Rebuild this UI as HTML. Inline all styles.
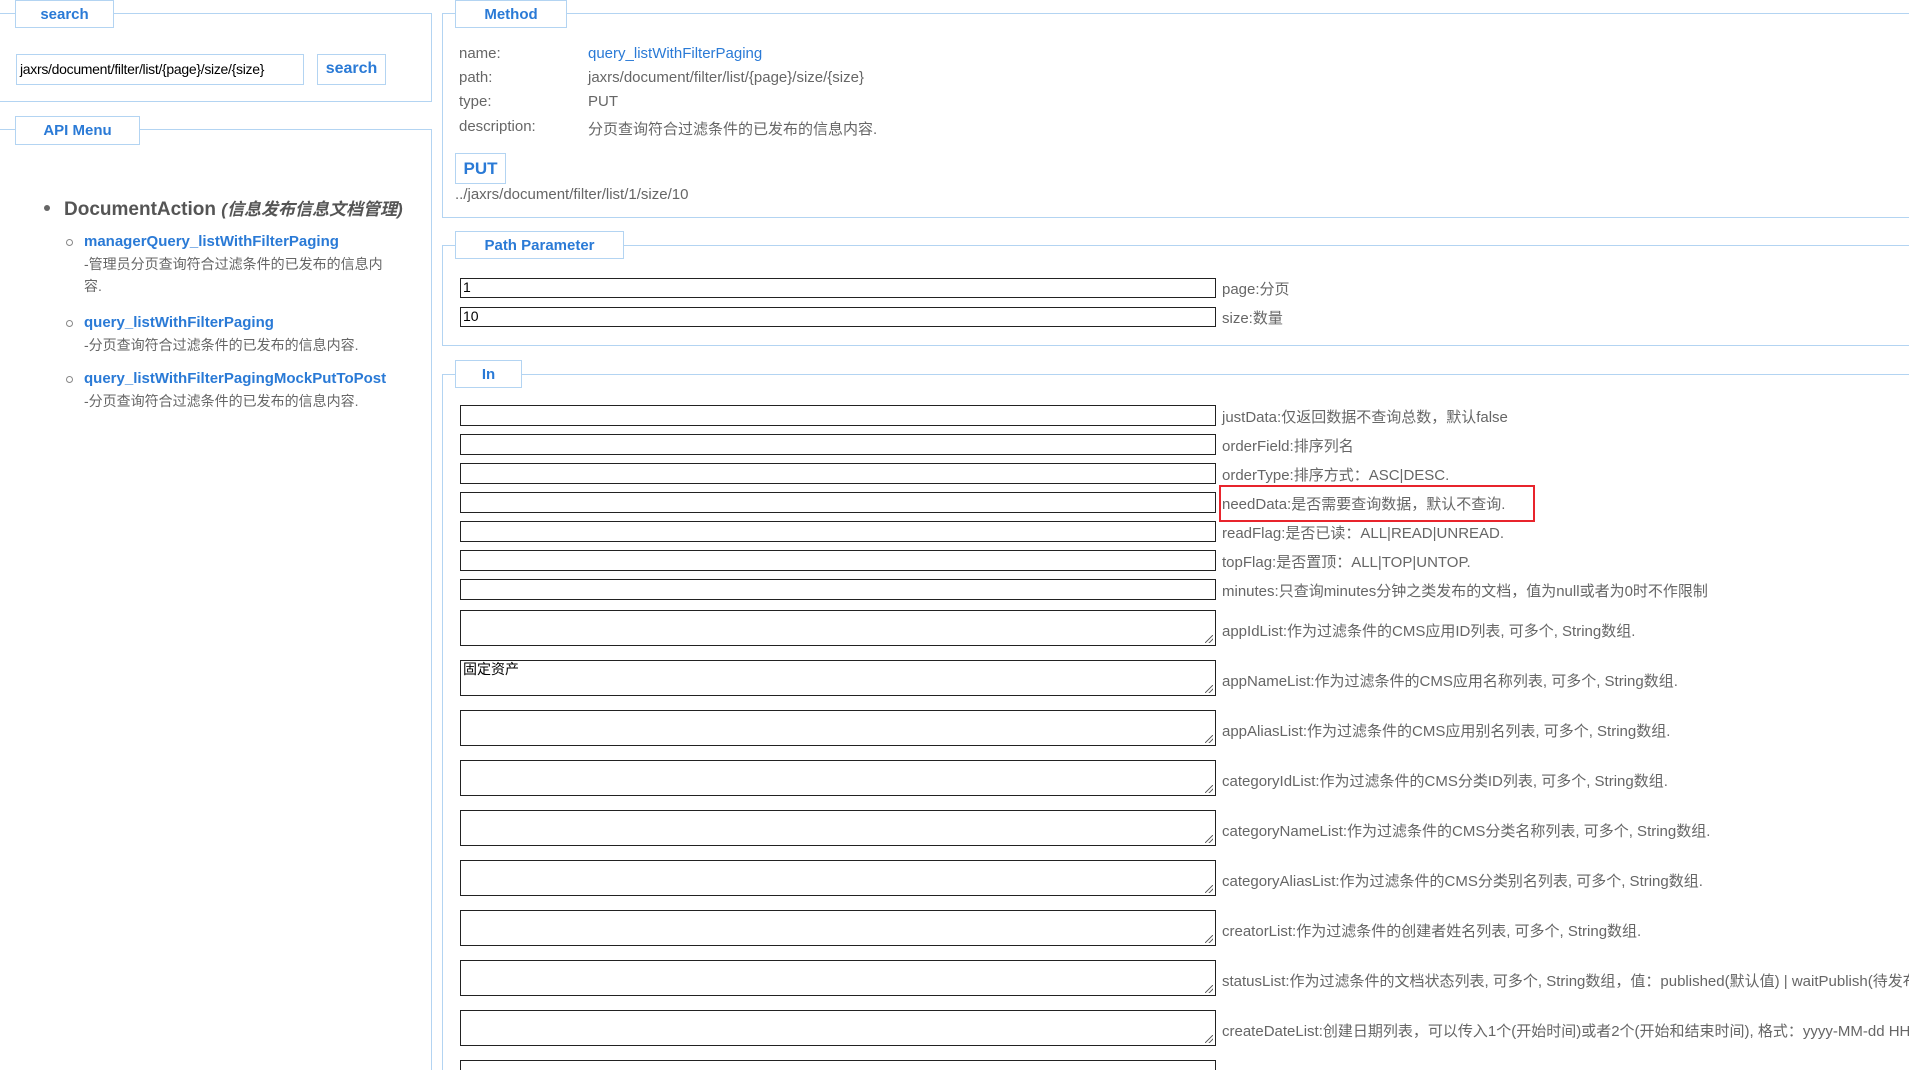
<!DOCTYPE html>
<html><head><meta charset="utf-8"><style>
*{margin:0;padding:0;box-sizing:border-box}
html,body{width:1909px;height:1070px;overflow:hidden}
body{background:#fff;font-family:"Liberation Sans","Noto Sans CJK SC",sans-serif;color:#666}
#w{position:relative;width:1909px;height:1070px;overflow:hidden}
.a{position:absolute}
.fs{position:absolute;border:1.5px solid #b3d4f2}
.lg{position:absolute;border:1.5px solid #b3d4f2;background:#fff;color:#2a7ad6;font-weight:bold;font-size:15px;text-align:center}
.inp{position:absolute;border:1.5px solid #222;background:#fff;font-size:14px;color:#000;padding-left:2px;line-height:17px}
.lbl{position:absolute;font-size:15px;color:#666;white-space:nowrap}
.ta::after{content:"";position:absolute;right:2px;bottom:2px;width:8px;height:8px;background:linear-gradient(135deg,transparent 45%,#666 45%,#666 55%,transparent 55%,transparent 70%,#666 70%,#666 80%,transparent 80%)}
.link{color:#2a7ad6;font-weight:bold;font-size:15px;line-height:22px;white-space:nowrap}
.desc{font-size:14px;color:#666;line-height:22px;white-space:nowrap}
</style></head><body><div id="w">
<div class="fs" style="left:0;top:13px;width:432px;height:89px;border-left:none"></div>
<div class="lg" style="left:15px;top:0;width:99px;height:28px;line-height:27px">search</div>
<div class="a" style="left:16px;top:54px;width:288px;height:31px;border:1.5px solid #b3d4f2;font-size:14px;color:#000;line-height:28px;padding-left:3px;letter-spacing:-0.3px">jaxrs/document/filter/list/{page}/size/{size}</div>
<div class="lg" style="left:317px;top:54px;width:69px;height:31px;line-height:28px;font-size:16px">search</div>
<div class="fs" style="left:0;top:129px;width:432px;height:1100px;border-left:none"></div>
<div class="lg" style="left:15px;top:116px;width:125px;height:29px;line-height:28px">API Menu</div>
<div class="a" style="left:44px;top:205px;width:6px;height:6px;border-radius:50%;background:#666"></div>
<div class="a" style="left:64px;top:195px;font-size:19px;font-weight:bold;color:#555;white-space:nowrap">DocumentAction <i style="font-size:17px">(信息发布信息文档管理)</i></div>
<div class="a" style="left:66px;top:239px;width:7px;height:7px;border-radius:50%;border:1.2px solid #888"></div>
<div class="a" style="left:84px;top:231px"><div class="link">managerQuery_listWithFilterPaging</div><div class="desc">-管理员分页查询符合过滤条件的已发布的信息内<br>容.</div></div>
<div class="a" style="left:66px;top:320px;width:7px;height:7px;border-radius:50%;border:1.2px solid #888"></div>
<div class="a" style="left:84px;top:312px"><div class="link">query_listWithFilterPaging</div><div class="desc">-分页查询符合过滤条件的已发布的信息内容.</div></div>
<div class="a" style="left:66px;top:376px;width:7px;height:7px;border-radius:50%;border:1.2px solid #888"></div>
<div class="a" style="left:84px;top:368px"><div class="link">query_listWithFilterPagingMockPutToPost</div><div class="desc">-分页查询符合过滤条件的已发布的信息内容.</div></div>
<div class="fs" style="left:442px;top:13px;width:1500px;height:205px"></div>
<div class="lg" style="left:455px;top:0;width:112px;height:28px;line-height:27px">Method</div>
<div class="lbl" style="left:459px;top:45px">name:</div><div class="lbl" style="left:588px;top:45px;color:#2a7ad6">query_listWithFilterPaging</div>
<div class="lbl" style="left:459px;top:69px">path:</div><div class="lbl" style="left:588px;top:69px">jaxrs/document/filter/list/{page}/size/{size}</div>
<div class="lbl" style="left:459px;top:93px">type:</div><div class="lbl" style="left:588px;top:93px">PUT</div>
<div class="lbl" style="left:459px;top:118px">description:</div><div class="lbl" style="left:588px;top:118px">分页查询符合过滤条件的已发布的信息内容.</div>
<div class="lg" style="left:455px;top:153px;width:51px;height:31px;line-height:29px;font-size:17px">PUT</div>
<div class="lbl" style="left:455px;top:186px">../jaxrs/document/filter/list/1/size/10</div>
<div class="fs" style="left:442px;top:245px;width:1500px;height:101px"></div>
<div class="lg" style="left:455px;top:231px;width:169px;height:28px;line-height:27px">Path Parameter</div>
<div class="inp" style="left:460px;top:278px;width:756px;height:20px">1</div><div class="lbl" style="left:1222px;top:278px">page:分页</div>
<div class="inp" style="left:460px;top:307px;width:756px;height:20px">10</div><div class="lbl" style="left:1222px;top:307px">size:数量</div>
<div class="fs" style="left:442px;top:374px;width:1500px;height:900px"></div>
<div class="lg" style="left:455px;top:360px;width:67px;height:28px;line-height:27px">In</div>
<div class="inp" style="left:460px;top:405px;width:756px;height:21px"></div><div class="lbl" style="left:1222px;top:406px">justData:仅返回数据不查询总数，默认false</div>
<div class="inp" style="left:460px;top:434px;width:756px;height:21px"></div><div class="lbl" style="left:1222px;top:435px">orderField:排序列名</div>
<div class="inp" style="left:460px;top:463px;width:756px;height:21px"></div><div class="lbl" style="left:1222px;top:464px">orderType:排序方式：ASC|DESC.</div>
<div class="inp" style="left:460px;top:492px;width:756px;height:21px"></div><div class="lbl" style="left:1222px;top:493px">needData:是否需要查询数据，默认不查询.</div>
<div class="a" style="left:1219px;top:485px;width:316px;height:37px;border:2px solid #e8242c"></div>
<div class="inp" style="left:460px;top:521px;width:756px;height:21px"></div><div class="lbl" style="left:1222px;top:522px">readFlag:是否已读：ALL|READ|UNREAD.</div>
<div class="inp" style="left:460px;top:550px;width:756px;height:21px"></div><div class="lbl" style="left:1222px;top:551px">topFlag:是否置顶：ALL|TOP|UNTOP.</div>
<div class="inp" style="left:460px;top:579px;width:756px;height:21px"></div><div class="lbl" style="left:1222px;top:580px">minutes:只查询minutes分钟之类发布的文档，值为null或者为0时不作限制</div>
<div class="inp ta" style="left:460px;top:610px;width:756px;height:36px"></div><div class="lbl" style="left:1222px;top:620px">appIdList:作为过滤条件的CMS应用ID列表, 可多个, String数组.</div>
<div class="inp ta" style="left:460px;top:660px;width:756px;height:36px">固定资产</div><div class="lbl" style="left:1222px;top:670px">appNameList:作为过滤条件的CMS应用名称列表, 可多个, String数组.</div>
<div class="inp ta" style="left:460px;top:710px;width:756px;height:36px"></div><div class="lbl" style="left:1222px;top:720px">appAliasList:作为过滤条件的CMS应用别名列表, 可多个, String数组.</div>
<div class="inp ta" style="left:460px;top:760px;width:756px;height:36px"></div><div class="lbl" style="left:1222px;top:770px">categoryIdList:作为过滤条件的CMS分类ID列表, 可多个, String数组.</div>
<div class="inp ta" style="left:460px;top:810px;width:756px;height:36px"></div><div class="lbl" style="left:1222px;top:820px">categoryNameList:作为过滤条件的CMS分类名称列表, 可多个, String数组.</div>
<div class="inp ta" style="left:460px;top:860px;width:756px;height:36px"></div><div class="lbl" style="left:1222px;top:870px">categoryAliasList:作为过滤条件的CMS分类别名列表, 可多个, String数组.</div>
<div class="inp ta" style="left:460px;top:910px;width:756px;height:36px"></div><div class="lbl" style="left:1222px;top:920px">creatorList:作为过滤条件的创建者姓名列表, 可多个, String数组.</div>
<div class="inp ta" style="left:460px;top:960px;width:756px;height:36px"></div><div class="lbl" style="left:1222px;top:970px">statusList:作为过滤条件的文档状态列表, 可多个, String数组，值：published(默认值) | waitPublish(待发布)</div>
<div class="inp ta" style="left:460px;top:1010px;width:756px;height:36px"></div><div class="lbl" style="left:1222px;top:1020px">createDateList:创建日期列表，可以传入1个(开始时间)或者2个(开始和结束时间), 格式：yyyy-MM-dd HH:mm:ss</div>
<div class="inp ta" style="left:460px;top:1060px;width:756px;height:36px"></div>
</div></body></html>
